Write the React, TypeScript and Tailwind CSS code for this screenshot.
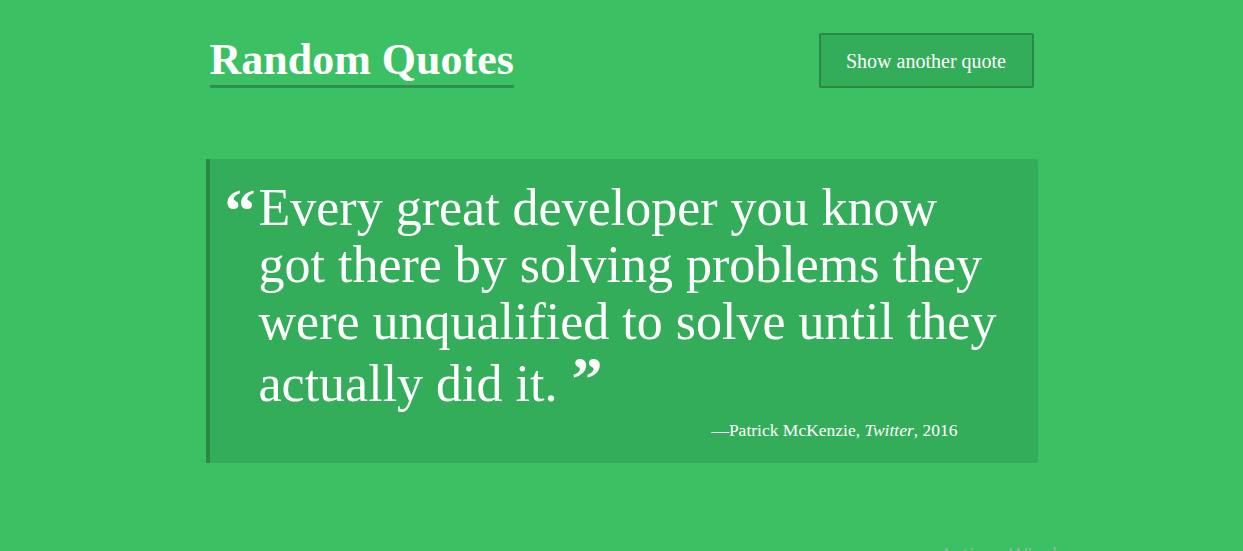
import React from 'react'

const quote = {
  lines: [
    'Every great developer you know',
    'got there by solving problems they',
    'were unqualified to solve until they',
    'actually did it.',
  ],
  author: 'Patrick McKenzie',
  source: 'Twitter',
  year: '2016',
}

const App = () => {
  return (
    <div
      className="relative min-h-[551px] bg-[#3bc163] text-white overflow-hidden"
      style={{ fontFamily: '"Liberation Serif", "Times New Roman", serif' }}
    >
      <div className="w-[832px] mx-auto pt-[32px]">
        <header className="flex justify-between items-end h-[56px]">
          <h1 className="ml-[4px] text-[44px] leading-[50px] font-bold border-b-[3px] border-[#2f8f4d]">
            Random Quotes
          </h1>
          <button className="mr-[4px] h-[55px] w-[215px] bg-[#34ad5a] border-2 border-[#2a8a45] rounded-[2px] text-[20px] text-white">
            Show another quote
          </button>
        </header>

        <blockquote className="mt-[71px] h-[304px] bg-[#34ad5a] border-l-4 border-[#2a8a45] rounded-r-[2px] pt-[20px]">
          <div className="flex pl-[15px] pr-[20px]">
            <span className="w-[34px] shrink-0 pt-[3px] text-[62px] font-bold leading-[57px]">&ldquo;</span>
            <p className="text-[52px] leading-[57px]">
              {quote.lines.map((line, i) => (
                <span key={i} className="block whitespace-nowrap">
                  {line}
                  {i === quote.lines.length - 1 && (
                    <span className="ml-[14px] font-bold text-[62px] align-[2px]">&rdquo;</span>
                  )}
                </span>
              ))}
            </p>
          </div>
          <p className="mt-[5px] pr-[80px] text-right text-[17.5px]">
            &mdash;{quote.author}, <em>{quote.source}</em>, {quote.year}
          </p>
        </blockquote>
      </div>

      <div className="absolute left-[940px] top-[540px] text-[20px] text-[#8fb89a]" style={{ fontFamily: '"Open Sans", sans-serif' }}>
        Activar Windows
      </div>
    </div>
  )
}

export default App
